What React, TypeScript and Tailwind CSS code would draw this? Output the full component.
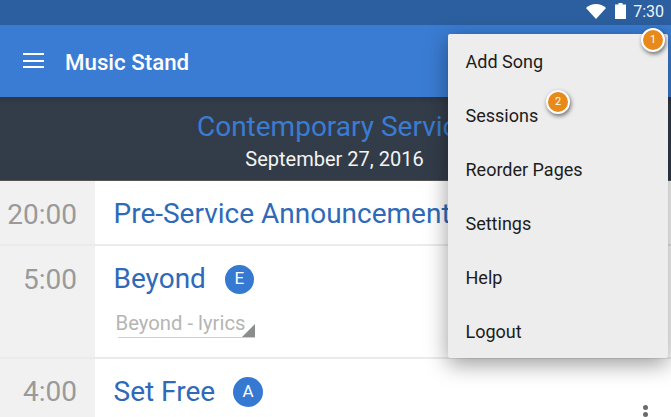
import React from 'react';

function Row(props: { time: string; title: string; keyName?: string; height: string; children?: React.ReactNode }) {
    return (
        <div className={`flex border-b-2 border-[#ebebeb] ${props.height}`}>
            <div className="w-[95px] shrink-0 bg-[#f1f1f1] pr-[18px] pt-[17px] text-right text-[28px] leading-[33px] text-[#9a9a9a]">
                {props.time}
            </div>
            <div className="flex-1 pl-[18.5px] pt-[16px]">
                <div className="flex items-center gap-[19px] h-[34px]">
                    <span className="text-[28px] leading-[34px] text-[#2e6ab8] whitespace-nowrap">{props.title}</span>
                    {props.keyName && (
                        <span className="flex h-[29px] w-[29px] items-center justify-center rounded-full bg-[#3579d3] text-[17px] text-white">
                            {props.keyName}
                        </span>
                    )}
                </div>
                {props.children}
            </div>
        </div>
    );
}

function Badge(props: { n: number; className: string }) {
    return (
        <div className={`absolute flex h-[24px] w-[24px] items-center justify-center rounded-full border-2 border-white bg-[#e8891c] text-[11px] text-white shadow-[1px_2px_4px_rgba(0,0,0,0.55)] ${props.className}`}>
            {props.n}
        </div>
    );
}

export default function App() {
    const items = ['Add Song', 'Sessions', 'Reorder Pages', 'Settings', 'Help', 'Logout'];

    return (
        <div className="relative h-[417px] w-[671px] overflow-hidden bg-white font-['Roboto',sans-serif]">
            <div className="flex h-[25px] items-center justify-end bg-[#2c5f9f] pr-[7px]">
                <svg width="20" height="15" viewBox="0 0 20 15" className="mr-[9px] mb-[3px]">
                    <path d="M0 3.9 C5.6 -1.3 14.4 -1.3 20 3.9 L10 15 Z" fill="#fff" />
                </svg>
                <svg width="11" height="16" viewBox="0 0 11 16" className="mr-[7px] mb-[3px]">
                    <path d="M3.5 0 H7.5 V1.5 H11 V16 H0 V1.5 H3.5 Z" fill="#fff" />
                </svg>
                <span className="mb-[1px] text-[16px] leading-[20px] text-[#f0f4f9]">7:30</span>
            </div>

            <div className="flex h-[72px] items-center bg-[#3a7cd3] pl-[23px]">
                <div className="flex w-[21px] flex-col gap-[4.5px] mb-[1px]">
                    <div className="h-[2px] bg-white" />
                    <div className="h-[2px] bg-white" />
                    <div className="h-[2px] bg-white" />
                </div>
                <span className="ml-[21px] mt-[2px] text-[22.3px] font-medium leading-[28px] text-white">Music Stand</span>
            </div>

            <div className="flex h-[84px] flex-col items-center border-b border-[#555] bg-gradient-to-b from-[#2d3642] from-0% via-[#333d4a] via-10% to-[#323c49] pt-[13px] pr-[2px]">
                <div className="text-[28px] leading-[34px] text-[#3a7cd3]">Contemporary Service</div>
                <div className="mt-[3px] text-[20px] leading-[24px] text-[#f4f4f4]">September 27, 2016</div>
            </div>

            <Row time="20:00" title="Pre-Service Announcements" height="h-[65px]" />
            <Row time="5:00" title="Beyond" keyName="E" height="h-[113px]">
                <div className="relative mt-[14px] ml-[4px] h-[28px] w-[137px] border-b border-[#cfcfcf]">
                    <span className="absolute left-[-2px] top-[1px] text-[20.3px] leading-[24px] text-[#b5b5b5] whitespace-nowrap">Beyond - lyrics</span>
                    <div className="absolute bottom-0 right-0 h-0 w-0 border-b-[13px] border-l-[13px] border-b-[#8c8c8c] border-l-transparent" />
                </div>
            </Row>
            <div className="flex h-[60px]">
                <div className="w-[95px] shrink-0 bg-[#f1f1f1] pr-[18px] pt-[16px] text-right text-[28px] leading-[33px] text-[#9a9a9a]">4:00</div>
                <div className="flex-1 pl-[18.5px] pt-[16px]">
                    <div className="flex h-[34px] items-center gap-[18px]">
                        <span className="text-[28px] leading-[34px] text-[#2e6ab8]">Set Free</span>
                        <span className="flex h-[30px] w-[30px] items-center justify-center rounded-full bg-[#3579d3] text-[17px] text-white">A</span>
                    </div>
                </div>
            </div>

            <div className="absolute left-[643px] top-[405px] flex flex-col gap-[2px]">
                <div className="h-[5px] w-[5px] rounded-full bg-[#6b6b6b]" />
                <div className="h-[5px] w-[5px] rounded-full bg-[#6b6b6b]" />
                <div className="h-[5px] w-[5px] rounded-full bg-[#6b6b6b]" />
            </div>

            <div className="absolute left-[448px] top-[34px] w-[220px] rounded-[2px] bg-[#ededed] shadow-[0_6px_22px_rgba(0,0,0,0.4)]">
                {items.map((item) => (
                    <div key={item} className="flex h-[54px] items-center pl-[17.5px] text-[18px] text-[#1c1c1c]">
                        {item}
                    </div>
                ))}
            </div>

            <Badge n={1} className="left-[641px] top-[28px]" />
            <Badge n={2} className="left-[546px] top-[90px]" />
        </div>
    );
}
